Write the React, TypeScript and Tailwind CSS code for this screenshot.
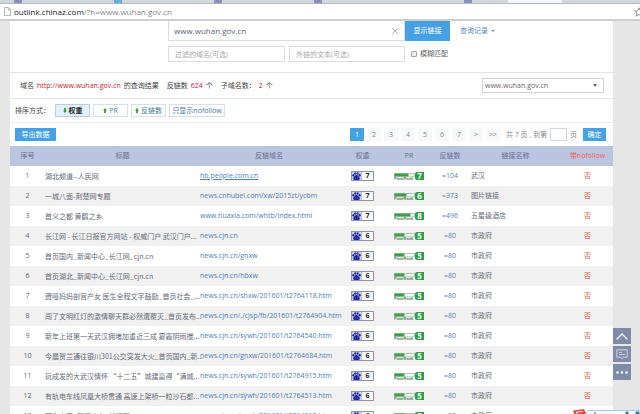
import React, { useState } from "react";
import clsx from "clsx";

type Link = {
  title: string;
  url: string;
  weight: number;
  pr: number;
  count: number;
  name: string;
};

const links: Link[] = [
  { title: "湖北频道--人民网", url: "hb.people.com.cn", weight: 7, pr: 7, count: 104, name: "武汉" },
  { title: "一城八面-荆楚网专题", url: "news.cnhubei.com/xw/2015zt/ycbm", weight: 7, pr: 6, count: 373, name: "图片链接" },
  { title: "首义之都 黄鹤之乡", url: "www.huaxia.com/whtb/index.html", weight: 7, pr: 8, count: 496, name: "五星级酒店" },
  { title: "长江网 - 长江日报官方网站 - 权威门户 武汉门户...", url: "news.cjn.cn", weight: 6, pr: 5, count: 80, name: "市政府" },
  { title: "首页国内_新闻中心_长江网_cjn.cn", url: "news.cjn.cn/gnxw", weight: 6, pr: 5, count: 80, name: "市政府" },
  { title: "首页湖北_新闻中心_长江网_cjn.cn", url: "news.cjn.cn/hbxw", weight: 6, pr: 5, count: 80, name: "市政府" },
  { title: "聋哑妈妈剖宫产女 医生全程文字鼓励_首页社会_...", url: "news.cjn.cn/shxw/201601/t2764118.htm", weight: 6, pr: 5, count: 80, name: "市政府" },
  { title: "闯了文明红灯的激情聊天群必然遭覆灭_首页发布...", url: "news.cjn.cn/./cjsp/fb/201601/t2764904.htm", weight: 6, pr: 5, count: 80, name: "市政府" },
  { title: "新年上班第一天武汉拥堵加重近三成 雾霾阴雨搅...", url: "news.cjn.cn/sywh/201601/t2764540.htm", weight: 6, pr: 5, count: 80, name: "市政府" },
  { title: "今晨贺兰通往银川301公交突发大火_首页国内_新...", url: "news.cjn.cn/gnxw/201601/t2764684.htm", weight: 6, pr: 5, count: 80, name: "市政府" },
  { title: "玩成发的大武汉情怀 “十二五”城建赢得“满城...", url: "news.cjn.cn/sywh/201601/t2764915.htm", weight: 6, pr: 5, count: 80, name: "市政府" },
  { title: "有轨电车线凤凰大桥贯通 高速上架桥一粒沙石都...", url: "news.cjn.cn/sywh/201601/t2764513.htm", weight: 6, pr: 5, count: 80, name: "市政府" },
  { title: "陌生来客_新闻中心_长江网", url: "news.cjn.cn/sywh/201601/t2764512.htm", weight: 6, pr: 5, count: 80, name: "市政府" },
];

const sorts = ["权重", "PR", "反链数"];
const pages = ["1", "2", "3", "4", "5", "6", "7", ">", ">>"];

function Arrow({ down }: { down?: boolean }) {
  return (
    <svg viewBox="0 0 4 5" className={clsx("h-[5px] w-[4px]", down && "rotate-180")} fill="#3f9a2f">
      <path d="M2 0 L4 2.4 H2.9 V5 H1.1 V2.4 H0 Z" />
    </svg>
  );
}

function WeightBadge({ value }: { value: number }) {
  return (
    <span className="flex h-[10px] w-[23px] border border-[#8f93a3] bg-white">
      <svg viewBox="0 0 9 8" className="h-[8px] w-[9px] bg-[#ccd1ee]" fill="#1c249c">
        <ellipse cx="3.3" cy="1.5" rx="1" ry="1.3" />
        <ellipse cx="5.7" cy="1.5" rx="1" ry="1.3" />
        <ellipse cx="1.3" cy="3.3" rx="1" ry="1.2" />
        <ellipse cx="7.7" cy="3.3" rx="1" ry="1.2" />
        <path d="M4.5 3 C6 3 6.4 4.4 7.4 5.2 C8.6 6.6 7.6 8 6 7.9 H3 C1.4 8 .4 6.6 1.6 5.2 C2.6 4.4 3 3 4.5 3 Z" />
        <path d="M3.4 5.4 V6.6 M5.6 5.4 V6.6" stroke="#aab0e0" strokeWidth="0.5" />
      </svg>
      <b className="flex-1 border-l border-[#b9bccb] text-center text-[7px] leading-[8px] text-[#222]">{value}</b>
    </span>
  );
}

function PrBadge({ value }: { value: number }) {
  return (
    <span className="flex h-[8px] w-[30px] items-center">
      <svg viewBox="0 0 21 7" className="h-[7px] w-[21px]">
        <rect x="0.5" y="0.5" width="20" height="3.4" fill="#f4faf3" stroke="#8fb98f" strokeWidth="0.7" />
        <rect x="0.5" y="0.5" width={value * 2} height="3" fill="#3f9f49" />
        <text x="0" y="7" fontSize="4" fontWeight="700" fill="#5d7f5d" fontFamily="Liberation Sans, sans-serif">
          PageRank
        </text>
      </svg>
      <b className="h-[8px] w-[9px] rounded-l-[2px] bg-[#2f9e48] text-center text-[8px] leading-[8px] text-white">
        {value}
      </b>
    </span>
  );
}

function AddressBar() {
  return (
    <header className="shrink-0">
      <div className="flex h-[4px] gap-[2px] border-b border-[#b5b9bf] bg-[#d3d6db]">
        <span className="ml-[14px] w-[8px] bg-[#8c8fc0]" />
        <span className="ml-[90px] w-[8px] bg-[#5dafe0]" />
        <span className="ml-[90px] w-[8px] bg-[#8c8fc0]" />
        <span className="ml-[90px] w-[8px] bg-[#8c8fc0]" />
        <span className="ml-[140px] w-[8px] bg-[#8794b8]" />
        <span className="ml-[34px] w-[54px] bg-[#f5f6f7]" />
      </div>
      <div className="flex h-[17px] items-center gap-[3px] border-b-2 border-[#cfcfcf] bg-white px-1">
        <svg viewBox="0 0 7 9" className="h-[9px] w-[7px]" fill="#fff" stroke="#999" strokeWidth="0.7">
          <path d="M.5 .5 H4.3 L6.5 2.8 V8.5 H.5 Z M4.3 .5 V2.8 H6.5" />
        </svg>
        <span className="flex-1 text-[8px] leading-[14px] text-[#8a8a8a]">
          <span className="text-[#222]">outlink.chinaz.com</span>/?h=www.wuhan.gov.cn
        </span>
        <svg viewBox="0 0 10 10" className="-mr-2 h-[10px] w-[10px]" fill="none" stroke="#777" strokeWidth="0.8">
          <path d="M5 .8 L6.3 3.7 L9.4 4 L7 6.1 L7.8 9.2 L5 7.5 L2.2 9.2 L3 6.1 L.6 4 L3.7 3.7 Z" />
        </svg>
      </div>
    </header>
  );
}

function SearchForm() {
  return (
    <form className="flex flex-col gap-[5px] border-b border-[#e4e4e4] pb-[10px] pl-[158px]">
      <div className="flex h-[20px] items-center">
        <div className="flex h-full w-[237px] items-center border border-t-0 border-[#dcdcdc] pr-[6px] pl-[5px]">
          <input
            aria-label="网址"
            defaultValue="www.wuhan.gov.cn"
            className="min-w-0 flex-1 text-[8px] leading-[14px] text-[#596070] outline-none"
          />
          <button type="button" aria-label="清除">
            <svg viewBox="0 0 6 6" className="h-[6px] w-[6px]" stroke="#999" strokeWidth="0.8">
              <path d="M.3 .3 L5.7 5.7 M5.7 .3 L.3 5.7" />
            </svg>
          </button>
        </div>
        <button type="button" className="h-full w-[45px] bg-[#45a1e3] text-white">
          显示链接
        </button>
        <button type="button" className="ml-[10px] flex items-center gap-[3px] text-[#5685be]">
          查询记录
          <svg viewBox="0 0 4 2" className="h-[2px] w-[4px]" fill="#7f9fca">
            <path d="M0 0 H4 L2 2 Z" />
          </svg>
        </button>
      </div>
      <div className="flex h-[16px] items-center">
        <input
          aria-label="过滤的域名"
          placeholder="过滤的域名(可选)"
          className="h-full w-[117px] border border-[#dcdcdc] px-[6px] outline-none placeholder:text-[#aaa]"
        />
        <input
          aria-label="外链的文本"
          placeholder="外链的文本(可选)"
          className="ml-[4px] h-full w-[116px] border border-[#dcdcdc] px-[6px] outline-none placeholder:text-[#aaa]"
        />
        <label className="ml-[6px] flex items-center gap-[3px] text-[#666]">
          <input
            type="checkbox"
            className="h-[6px] w-[6px] appearance-none rounded-[1px] border border-[#a5a5a5] bg-[#eee] checked:bg-[#45a1e3]"
          />
          模糊匹配
        </label>
      </div>
    </form>
  );
}

function Summary() {
  return (
    <div className="flex h-[26px] items-center justify-between border-b border-[#e8e8e8] pr-[9px] pl-[10px] text-[#444]">
      <p className="flex gap-[8px]">
        <span className="flex gap-[3px]">
          域名 <span className="text-[#d0222e]">http://www.wuhan.gov.cn</span> 的查询结果
        </span>
        <span className="flex gap-[3px]">
          反链数 <span className="text-[#d0222e]">624</span> 个
        </span>
        <span className="flex gap-[3px]">
          子域名数： <span className="text-[#d0222e]">2</span> 个
        </span>
      </p>
      <div className="flex h-[15px] w-[122px] items-center border border-[#d4d4d4] pr-[6px]">
        <select aria-label="子域名" className="min-w-0 flex-1 appearance-none pl-[2px] text-[7px] text-[#666] outline-none">
          <option>www.wuhan.gov.cn</option>
        </select>
        <svg viewBox="0 0 4 3" className="h-[3px] w-[4px]" fill="#666">
          <path d="M0 0 H4 L2 3 Z" />
        </svg>
      </div>
    </div>
  );
}

function SortBar() {
  const [sort, setSort] = useState("权重");

  return (
    <div className="flex h-[24px] items-center gap-[3px] border-b border-[#ececec] pl-[5px]">
      <span className="w-[37px] whitespace-nowrap text-[#444]">排序方式：</span>
      {sorts.map((item) => (
        <button
          key={item}
          onClick={() => setSort(item)}
          className={clsx(
            "flex h-[13px] w-[35px] items-center justify-center gap-[2px] border",
            sort === item
              ? "border-[#b5d0e0] bg-[#e2f1fa] font-bold text-[#222]"
              : "border-[#d6e2ea] bg-white text-[#4a7b98]"
          )}
        >
          <Arrow down={sort === item} />
          {item}
        </button>
      ))}
      <button className="h-[13px] w-[56px] border border-[#d6e2ea] whitespace-nowrap text-[#4a7b98]">
        只显示nofollow
      </button>
    </div>
  );
}

function Pager() {
  const [page, setPage] = useState("1");

  return (
    <div className="flex h-[23px] items-center justify-between pr-[7px] pl-[5px]">
      <button className="h-[13px] w-[41px] bg-[#45a1e3] text-white">导出数据</button>
      <div className="flex items-center gap-[3px] text-[#888]">
        {pages.map((item) => (
          <button
            key={item}
            onClick={() => setPage(item)}
            className={clsx("h-[13px] w-[14px]", page === item ? "bg-[#45a1e3] text-white" : "bg-[#f7f8fa]")}
          >
            {item}
          </button>
        ))}
        <label className="ml-[3px] flex items-center gap-[3px]">
          共 7 页 , 到第
          <input aria-label="页码" className="h-[13px] w-[17px] border border-[#d8d8d8] outline-none" />页
        </label>
        <button className="ml-[3px] h-[13px] w-[23px] bg-[#45a1e3] text-white">确定</button>
      </div>
    </div>
  );
}

function LinkTable() {
  return (
    <table className="w-full table-fixed border-collapse whitespace-nowrap">
      <colgroup>
        <col className="w-[35px]" />
        <col className="w-[155px]" />
        <col className="w-[138px]" />
        <col className="w-[49px]" />
        <col className="w-[44px]" />
        <col className="w-[38px]" />
        <col />
        <col className="w-[51px]" />
      </colgroup>
      <thead>
        <tr className="h-[20px] bg-[#bac5df] text-[#66708c] *:p-0 *:font-normal">
          <th>序号</th>
          <th>标题</th>
          <th>反链域名</th>
          <th>权重</th>
          <th>PR</th>
          <th>反链数</th>
          <th>链接名称</th>
          <th className="text-[#f0625a]">带nofollow</th>
        </tr>
      </thead>
      <tbody>
        {links.map((link, index) => (
          <tr key={index} className="h-[20px] odd:bg-white even:bg-[#f1f1f1] *:p-0">
            <td className="text-center">{index + 1}</td>
            <td className="font-['Noto_Sans_CJK_SC',sans-serif]">{link.title}</td>
            <td>
              <a href="#" className={clsx("text-[#4f80bb]", index === 0 && "underline")}>
                {link.url}
              </a>
            </td>
            <td>
              <div className="flex justify-center">
                <WeightBadge value={link.weight} />
              </div>
            </td>
            <td>
              <div className="flex justify-center">
                <PrBadge value={link.pr} />
              </div>
            </td>
            <td className="text-center text-[#5a83b8]">={link.count}</td>
            <td>
              <div className="pl-[2px]">{link.name}</div>
            </td>
            <td className="text-center text-[#e8503a]">否</td>
          </tr>
        ))}
      </tbody>
    </table>
  );
}

function SideTools() {
  return (
    <div className="absolute right-[9px] bottom-[34px] flex flex-col gap-[2px] *:flex *:h-[16px] *:w-[18px] *:items-center *:justify-center *:bg-[#7f8ca8]">
      <button aria-label="回到顶部">
        <svg viewBox="0 0 12 7" className="h-[7px] w-[12px]" fill="none" stroke="#fff" strokeWidth="1.3">
          <path d="M.6 6.4 L6 1 L11.4 6.4" />
        </svg>
      </button>
      <button aria-label="反馈">
        <svg viewBox="0 0 12 11" className="h-[11px] w-[12px]" fill="none" stroke="#e3e7f0" strokeWidth="0.8">
          <path d="M.8 .8 H11.2 V8.2 H7.4 L6 9.8 L4.6 8.2 H.8 Z M3 3.4 H6 M3 5.6 H9" />
        </svg>
      </button>
      <button aria-label="更多">
        <svg viewBox="0 0 12 3" className="h-[3px] w-[12px]" fill="#fff">
          <circle cx="1.5" cy="1.5" r="1.2" />
          <circle cx="6" cy="1.5" r="1.2" />
          <circle cx="10.5" cy="1.5" r="1.2" />
        </svg>
      </button>
    </div>
  );
}

// Top edge of the input method bar, peeking in from the desktop
function ImeBar() {
  return (
    <div className="absolute right-0 bottom-0 flex h-[5px] w-[67px] items-end overflow-hidden">
      <svg viewBox="0 0 67 5" className="h-[5px] w-[67px]">
        <path d="M14 1.5 H67 V5 H14 Z" fill="#f4f9fd" />
        <path d="M14 1.5 H67" stroke="#8fc0e2" strokeWidth="0.8" />
        <path d="M0 1.6 L11 0 L13 5 H1.2 Z" fill="#e2503a" />
        <path d="M4 5 L3.4 3.2 L9.6 2.3" stroke="#fff" strokeWidth="1" fill="none" />
        <path d="M22 3 V5 M53 3 H55 V5 H53 Z M63 3 H66 V5 H63 Z" stroke="#2d78b8" fill="#2d78b8" strokeWidth="1" />
      </svg>
    </div>
  );
}

export default function App() {
  return (
    <div className="relative flex h-screen flex-col overflow-hidden bg-[#e6e6e6] font-['Open_Sans','Noto_Sans_CJK_SC',sans-serif] text-[7px] leading-[10px] text-[#666b78]">
      <AddressBar />
      <main className="mr-[27px] ml-[10px] bg-white">
        <SearchForm />
        <Summary />
        <SortBar />
        <Pager />
        <LinkTable />
      </main>
      <SideTools />
      <ImeBar />
    </div>
  );
}
